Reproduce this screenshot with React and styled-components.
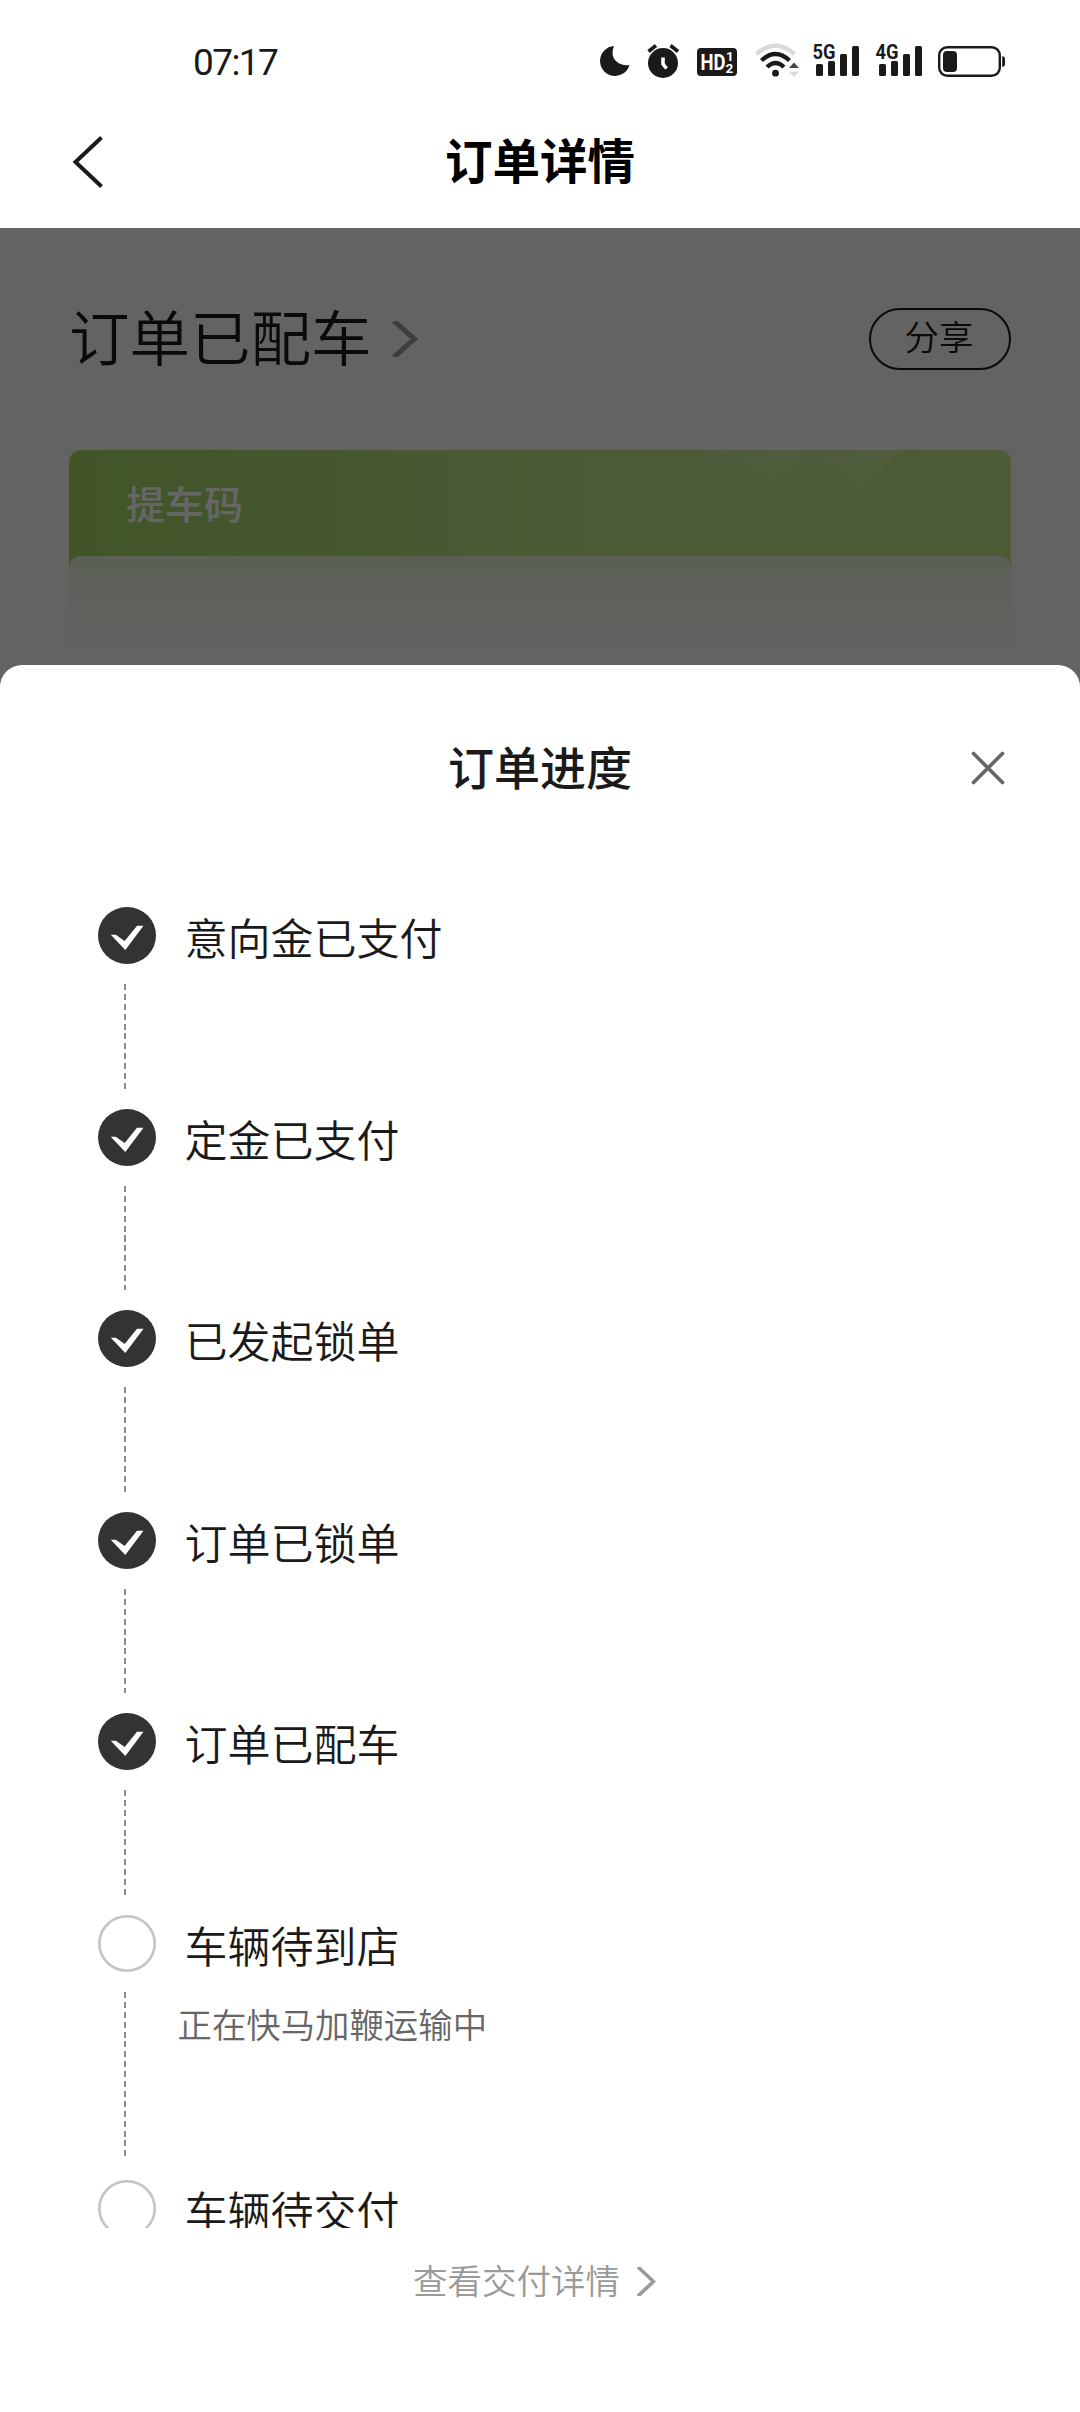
import React from 'react';
import styled, { createGlobalStyle } from 'styled-components';

const GlobalStyle = createGlobalStyle`
  * {
    box-sizing: border-box;
  }

  body {
    margin: 0;
    background-color: #fff;
    font-family: "Noto Sans CJK SC", sans-serif;
    color: #1a1a1a;
  }
`;

const Screen = styled.div`
  position: relative;
  display: flex;
  flex-direction: column;
  width: 1080px;
  height: 2412px;
  overflow: hidden;
  background-color: #fff;
`;

const StatusBar = styled.div`
  display: flex;
  align-items: center;
  justify-content: space-between;
  height: 124px;
  padding: 0 75px 0 193px;
`;

const Clock = styled.span`
  padding-top: 1px;
  font-family: Roboto, sans-serif;
  font-size: 37px;
  line-height: 44px;
  letter-spacing: -1.6px;
`;

const StatusIcons = styled.svg`
  display: block;
  width: 412px;
  height: 44px;

  text {
    font-family: Roboto, sans-serif;
    font-weight: 700;
  }
`;

const NavBar = styled.header`
  display: grid;
  grid-template-columns: 108px 1fr 108px;
  align-items: center;
  height: 104px;
  padding-bottom: 28px;
`;

const BackIcon = styled.svg`
  width: 34px;
  height: 52px;
  margin-left: 71px;
`;

const NavTitle = styled.h1`
  margin: 0;
  padding-bottom: 6px;
  font-size: 47.5px;
  font-weight: 700;
  line-height: 60px;
  text-align: center;
  color: #000;
`;

const Content = styled.main`
  position: relative;
  flex: 1;
  padding: 80px 69px 0;
  background-color: #f8f8f8;
`;

const StatusRow = styled.div`
  display: flex;
  align-items: center;
  justify-content: space-between;
  height: 62px;
`;

const OrderStatus = styled.div`
  display: flex;
  align-items: center;
  gap: 20px;
`;

const OrderStatusText = styled.span`
  padding-bottom: 8px;
  font-size: 60.5px;
  font-weight: 350;
  line-height: 62px;
`;

const ShareButton = styled.button`
  width: 142px;
  height: 62px;
  padding: 0 2px 8px 0;
  border: 2px solid #1a1a1a;
  border-radius: 31px;
  background: none;
  font-family: inherit;
  font-size: 34.5px;
  font-weight: 350;
  line-height: 50px;
  color: #1a1a1a;
`;

const PickupCard = styled.section`
  position: relative;
  height: 300px;
  margin-top: 80px;
  border-radius: 12px;
  overflow: hidden;
  background: linear-gradient(90deg, #a2d563 0%, #b3dc7c 35%, #bde487 60%, #c0e487 100%);
`;

const CardShine = styled.svg`
  position: absolute;
  top: 0;
  left: 560px;
  width: 300px;
  height: 106px;
`;

const CardTitle = styled.div`
  height: 106px;
  padding-left: 57px;
  font-size: 39px;
  font-weight: 500;
  line-height: 105px;
  color: #fff;
`;

const CardBody = styled.div`
  position: relative;
  height: 194px;
  border-radius: 12px 12px 0 0;
  background: linear-gradient(180deg, #e2f0d6 0px, #eff5ea 55px, #f4f8f3 90px, #f8f8f8 115px);
`;

const Mask = styled.div`
  position: absolute;
  inset: 0;
  background-color: rgba(0, 0, 0, 0.6);
`;

const Sheet = styled.section`
  position: absolute;
  left: 0;
  right: 0;
  bottom: 0;
  display: flex;
  flex-direction: column;
  height: 1747px;
  border-radius: 22px 22px 0 0;
  background-color: #fff;
`;

const SheetHeader = styled.div`
  display: grid;
  grid-template-columns: 108px 1fr 108px;
  align-items: center;
  height: 204px;
`;

const SheetTitle = styled.h2`
  grid-column: 2;
  margin: 0;
  padding-bottom: 5px;
  font-size: 46px;
  font-weight: 500;
  line-height: 60px;
  text-align: center;
`;

const CloseIcon = styled.svg`
  width: 36px;
  height: 36px;
  margin: 2px 0 0 -2px;
`;

const StepList = styled.ul`
  flex: none;
  height: 1359px;
  margin: 0;
  padding: 38px 98px 0;
  overflow: hidden;
  list-style: none;
`;

const Step = styled.li`
  display: flex;
  height: ${props => (props.$tall ? 265 : 201.6)}px;
`;

const Rail = styled.div`
  display: flex;
  flex-direction: column;
  width: 58px;
  height: 100%;
`;

const StepIcon = styled.svg`
  flex: none;
  display: block;
  width: 58px;
  height: 58px;
`;

const Connector = styled.div`
  flex: 1;
  width: 2px;
  margin: 19px 0 20px 26px;
  background: repeating-linear-gradient(180deg, #8c8c8c 0px, #8c8c8c 6px, transparent 6px, transparent 9.9px);
`;

const StepText = styled.div`
  padding-left: 28.5px;
`;

const StepTitle = styled.div`
  font-size: 43px;
  font-weight: 350;
  line-height: 58px;
`;

const StepNote = styled.div`
  margin: 25px 0 0 -7px;
  font-size: 34.4px;
  font-weight: 350;
  line-height: 50px;
  color: #666;
`;

const DetailLink = styled.a`
  display: flex;
  align-items: center;
  justify-content: center;
  gap: 16px;
  height: 106px;
  padding-right: 11px;
  color: #999;
`;

const DetailText = styled.span`
  padding-bottom: 5px;
  font-size: 34.5px;
  font-weight: 350;
  line-height: 50px;
`;

const steps = [
  { title: '意向金已支付', done: true },
  { title: '定金已支付', done: true },
  { title: '已发起锁单', done: true },
  { title: '订单已锁单', done: true },
  { title: '订单已配车', done: true },
  { title: '车辆待到店', note: '正在快马加鞭运输中' },
  { title: '车辆待交付' },
];

const Signal = ({ x, label }) => (
  <g transform={`translate(${x} 0)`} fill="#1a1a1a">
    <text x="-0.5" y="19" fontSize="21" textLength="23" lengthAdjust="spacingAndGlyphs">{label}</text>
    <rect x="3" y="24" width="7" height="12" rx="1.5" />
    <rect x="15" y="21" width="7" height="15" rx="1.5" />
    <rect x="27" y="14" width="7" height="22" rx="1.5" />
    <rect x="39" y="6" width="7" height="30" rx="1.5" />
  </g>
);

const Status = () => (
  <StatusIcons viewBox="593 40 412 44">
    <path d="M614 46 A15 15 0 1 0 629.5 65 C621 66.5 612.5 61 612.5 53 Q612.5 49 614 46 Z" fill="#1a1a1a" />

    <circle cx="663" cy="63" r="15" fill="#1a1a1a" />
    <path d="M648.5 51.5 L656 45.5 M678 51.5 L670.5 45.5" stroke="#1a1a1a" strokeWidth="3.6" />
    <path d="M663 57.5 V64 L666.5 68.5" fill="none" stroke="#fff" strokeWidth="3.6" />

    <rect x="697" y="48" width="40" height="28" rx="4" fill="#1a1a1a" />
    <g fill="#fff">
      <text x="700.5" y="70" fontSize="22.5" textLength="25" lengthAdjust="spacingAndGlyphs">HD</text>
      <text x="726" y="61" fontSize="13.5">1</text>
      <text x="725.5" y="73" fontSize="13.5">2</text>
    </g>

    <g fill="none" strokeWidth="4.4">
      <path d="M756.5 54 Q775.5 37.5 794.5 54" stroke="#d9d9d9" />
      <path d="M761.5 60.5 Q775.5 47.5 789.5 60.5" stroke="#1a1a1a" />
      <path d="M767 67 Q775.5 59 784 67" stroke="#1a1a1a" />
    </g>
    <circle cx="775.5" cy="73.2" r="3.4" fill="#1a1a1a" />
    <path d="M789 68 L794 62.5 L799 68 Z" fill="#444" />
    <path d="M789 71.5 L794 77 L799 71.5 Z" fill="#d9d9d9" />

    <g transform="translate(0 40)">
      <Signal x={813} label="5G" />
      <Signal x={876} label="4G" />
    </g>

    <rect x="939.2" y="47.2" width="60.6" height="28.6" rx="8" fill="none" stroke="#1a1a1a" strokeWidth="2.4" />
    <rect x="943" y="51" width="14" height="21" rx="4" fill="#1a1a1a" />
    <path d="M1002.2 56 Q1005 56.5 1005 58.5 V64.5 Q1005 66.5 1002.2 67 Z" fill="#1a1a1a" />
  </StatusIcons>
);

const Chevron = ({ width, height, stroke, strokeWidth }) => (
  <svg width={width} height={height} viewBox={`0 0 ${width} ${height}`}>
    <path
      d={`M2 0 L${width - strokeWidth * 0.7} ${height / 2} L2 ${height}`}
      fill="none"
      stroke={stroke}
      strokeWidth={strokeWidth}
    />
  </svg>
);

const StepMark = ({ done }) => (
  <StepIcon viewBox="0 0 58 58">
    {done ? (
      <>
        <ellipse cx="29" cy="28.5" rx="29" ry="28.5" fill="#333" />
        <path d="M12.8 27.7 H17.8 L26.7 34 L39 18.8 H45.5 L27.3 43 Z" fill="#fff" />
      </>
    ) : (
      <ellipse cx="29" cy="28.5" rx="27.7" ry="27.2" fill="#fff" stroke="#c4c4c4" strokeWidth="2.6" />
    )}
  </StepIcon>
);

const App = () => {
  return (
    <Screen>
      <GlobalStyle />
      <StatusBar>
        <Clock>07:17</Clock>
        <Status />
      </StatusBar>
      <NavBar>
        <BackIcon viewBox="0 0 34 52">
          <path d="M30.5 1.5 L4.5 26 L30.5 50.5" fill="none" stroke="#1a1a1a" strokeWidth="4" />
        </BackIcon>
        <NavTitle>订单详情</NavTitle>
      </NavBar>

      <Content>
        <StatusRow>
          <OrderStatus>
            <OrderStatusText>订单已配车</OrderStatusText>
            <Chevron width={26} height={36} stroke="#999" strokeWidth={5} />
          </OrderStatus>
          <ShareButton>分享</ShareButton>
        </StatusRow>
        <PickupCard>
          <CardShine viewBox="0 0 300 106">
            <defs>
              <linearGradient id="shine" x1="0" y1="1" x2="1" y2="0">
                <stop offset="0.3" stopColor="#fff" stopOpacity="0" />
                <stop offset="1" stopColor="#fff" stopOpacity="0.2" />
              </linearGradient>
            </defs>
            <path d="M80 0 H175 L75 106 H0 Z" fill="url(#shine)" />
            <path d="M175 0 H272 L166 106 H75 Z" fill="url(#shine)" />
          </CardShine>
          <CardTitle>提车码</CardTitle>
          <CardBody />
        </PickupCard>
        <Mask />
      </Content>

      <Sheet>
        <SheetHeader>
          <SheetTitle>订单进度</SheetTitle>
          <CloseIcon viewBox="0 0 36 36">
            <path d="M3.5 3.5 L32.5 32.5 M32.5 3.5 L3.5 32.5" stroke="#666" strokeWidth="3.6" strokeLinecap="round" />
          </CloseIcon>
        </SheetHeader>
        <StepList>
          {steps.map((step, index) => (
            <Step key={index} $tall={Boolean(step.note)}>
              <Rail>
                <StepMark done={step.done} />
                <Connector />
              </Rail>
              <StepText>
                <StepTitle>{step.title}</StepTitle>
                {step.note && <StepNote>{step.note}</StepNote>}
              </StepText>
            </Step>
          ))}
        </StepList>
        <DetailLink>
          <DetailText>查看交付详情</DetailText>
          <Chevron width={20} height={29} stroke="#999" strokeWidth={3.6} />
        </DetailLink>
      </Sheet>
    </Screen>
  );
};

export default App;
